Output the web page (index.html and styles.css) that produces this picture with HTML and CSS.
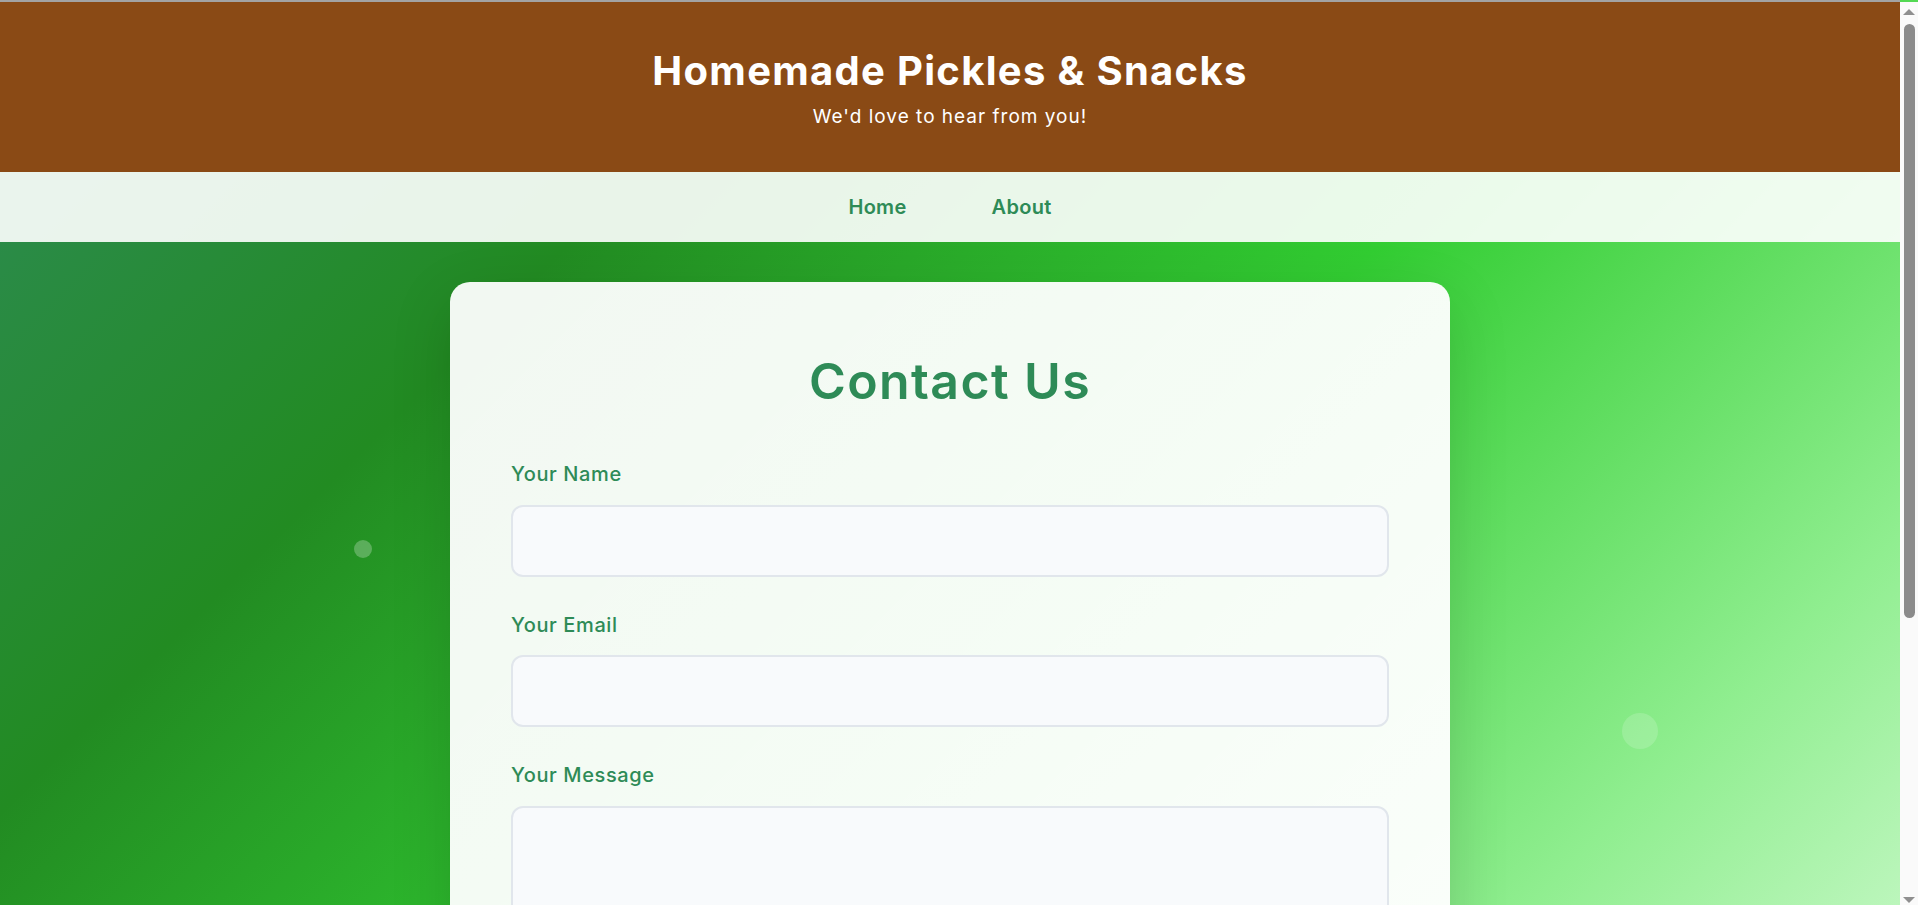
FILE: index.html
```html
<!DOCTYPE html>
<html lang="en">
<head>
<meta charset="utf-8">
<title>Contact Us - Homemade Pickles &amp; Snacks</title>
<link rel="stylesheet" href="styles.css">
</head>
<body>
<div class="topline"></div>
<header class="site-header">
  <h1 class="site-title">Homemade Pickles &amp; Snacks</h1>
  <p class="site-tagline">We'd love to hear from you!</p>
</header>
<nav class="site-nav">
  <a href="#" class="nav-link">Home</a>
  <a href="#" class="nav-link">About</a>
</nav>
<main class="main">
  <span class="bubble bubble-a"></span>
  <span class="bubble bubble-b"></span>
  <section class="card">
    <h2 class="card-title">Contact Us</h2>
    <form class="form">
      <div class="field">
        <label class="field-label" for="name">Your Name</label>
        <input class="field-input" id="name" type="text">
      </div>
      <div class="field">
        <label class="field-label" for="email">Your Email</label>
        <input class="field-input" id="email" type="email">
      </div>
      <div class="field">
        <label class="field-label" for="message">Your Message</label>
        <textarea class="field-input field-textarea" id="message"></textarea>
      </div>
      <button class="submit" type="button">Send Message</button>
    </form>
  </section>
</main>
<footer class="site-footer">
  <p class="footer-text">&copy; 2024 Homemade Pickles &amp; Snacks. All rights reserved.</p>
</footer>
<div class="scrollbar" aria-hidden="true">
  <span class="sb-arrow sb-up"></span>
  <span class="sb-thumb"></span>
  <span class="sb-arrow sb-down"></span>
</div>
</body>
</html>
```

FILE: styles.css
```css
html, body {
  margin: 0;
  padding: 0;
}

body {
  margin-right: 18px;
  font-family: Inter, "Noto Sans", sans-serif;
  background: linear-gradient(135deg, #2e8b57 0%, #228b22 25%, #32cd32 50%, #90ee90 75%, #f0fff0 100%);
  color: #2e8b57;
}

.topline {
  height: 2px;
  background: #a3a3a3;
  margin-right: -18px;
}

.site-header {
  background: #8a4a15;
  color: #ffffff;
  text-align: center;
  padding: 45px 20px 40px;
}

.site-title {
  margin: 0 0 7px;
  font-size: 40px;
  line-height: 48px;
  font-weight: 700;
  letter-spacing: 1.3px;
}

.site-tagline {
  margin: 0;
  font-size: 19px;
  line-height: 30px;
  font-weight: 400;
  letter-spacing: 1px;
}

.site-nav {
  height: 70px;
  display: flex;
  justify-content: center;
  align-items: center;
  gap: 85px;
  background: rgba(255, 255, 255, 0.9);
}

.nav-link {
  color: #2e8b57;
  text-decoration: none;
  font-size: 20px;
  font-weight: 600;
  letter-spacing: 0.3px;
}

.main {
  position: relative;
  padding: 40px 20px 110px;
}

.bubble {
  position: absolute;
  border-radius: 50%;
  background: rgba(255, 255, 255, 0.25);
}

.bubble-a {
  left: 354px;
  top: 298px;
  width: 18px;
  height: 18px;
}

.bubble-b {
  left: 1622px;
  top: 471px;
  width: 36px;
  height: 36px;
  background: rgba(255, 255, 255, 0.16);
}

.card {
  position: relative;
  max-width: 1000px;
  box-sizing: border-box;
  margin: 0 auto;
  padding: 64px 61px 60px;
  border-radius: 20px;
  background: linear-gradient(135deg, rgba(255, 255, 255, 0.94), rgba(255, 255, 255, 0.96));
  box-shadow: 0 20px 60px rgba(0, 0, 0, 0.15);
}

.card-title {
  margin: 0 0 44px;
  text-align: center;
  font-size: 50px;
  line-height: 70px;
  font-weight: 600;
  letter-spacing: 1.4px;
  color: #2e8b57;
}

.field {
  margin-bottom: 34px;
}

.field-label {
  display: block;
  margin-bottom: 16px;
  font-size: 20px;
  line-height: 28.5px;
  font-weight: 500;
  letter-spacing: 0.6px;
  color: #2e8b57;
}

.field-input {
  display: block;
  width: 100%;
  height: 72px;
  box-sizing: border-box;
  padding: 20px;
  border: 2px solid #e1e6ec;
  border-radius: 12px;
  background: #f8fafc;
  font-family: inherit;
  font-size: 16px;
  outline: none;
}

.field-textarea {
  height: 180px;
  resize: vertical;
}

.submit {
  display: block;
  width: 100%;
  height: 60px;
  border: none;
  border-radius: 12px;
  background: linear-gradient(135deg, #2e8b57, #32cd32);
  color: #ffffff;
  font-family: inherit;
  font-size: 18px;
  font-weight: 600;
}

.site-footer {
  background: #8a4a15;
  color: #ffffff;
  text-align: center;
  padding: 30px 20px;
}

.footer-text {
  margin: 0;
  font-size: 15px;
}

/* browser scrollbar as seen in the reference */
.scrollbar {
  position: fixed;
  top: 2px;
  right: 0;
  bottom: 0;
  width: 18px;
  display: flex;
  flex-direction: column;
  align-items: center;
  background: #fafafa;
}

.sb-arrow {
  width: 0;
  height: 0;
  border-left: 6px solid transparent;
  border-right: 6px solid transparent;
}

.sb-up {
  margin-top: 7px;
  border-bottom: 6px solid #8f8f8f;
}

.sb-thumb {
  width: 11px;
  height: 594px;
  margin-top: 9px;
  border-radius: 6px;
  background: #8b8b8b;
}

.sb-down {
  margin-top: auto;
  margin-bottom: 2px;
  border-top: 6px solid #8f8f8f;
}
```
